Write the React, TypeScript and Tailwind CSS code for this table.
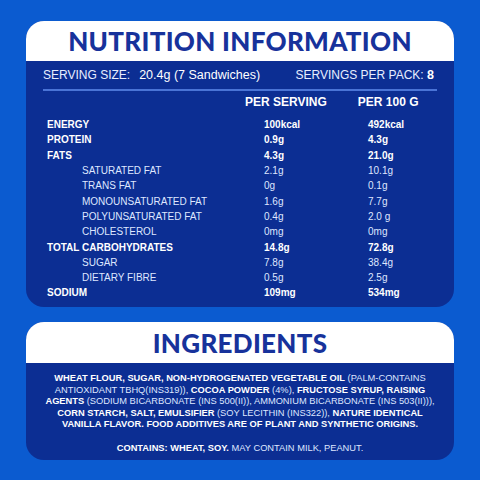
type Row = {
  label: string
  perServing: string
  per100: string
  main?: boolean
}

const rows: Row[] = [
  { label: "ENERGY", perServing: "100kcal", per100: "492kcal", main: true },
  { label: "PROTEIN", perServing: "0.9g", per100: "4.3g", main: true },
  { label: "FATS", perServing: "4.3g", per100: "21.0g", main: true },
  { label: "SATURATED FAT", perServing: "2.1g", per100: "10.1g" },
  { label: "TRANS FAT", perServing: "0g", per100: "0.1g" },
  { label: "MONOUNSATURATED FAT", perServing: "1.6g", per100: "7.7g" },
  { label: "POLYUNSATURATED FAT", perServing: "0.4g", per100: "2.0 g" },
  { label: "CHOLESTEROL", perServing: "0mg", per100: "0mg" },
  { label: "TOTAL CARBOHYDRATES", perServing: "14.8g", per100: "72.8g", main: true },
  { label: "SUGAR", perServing: "7.8g", per100: "38.4g" },
  { label: "DIETARY FIBRE", perServing: "0.5g", per100: "2.5g" },
  { label: "SODIUM", perServing: "109mg", per100: "534mg", main: true },
]

const titleFont = "font-['Lato','Inter',sans-serif] font-black"
const bodyFont = "font-['Liberation_Sans','Arial',sans-serif]"

const NutritionRow = ({ row }: { row: Row }) => (
  <div className={`grid grid-cols-[217px_104px_1fr] h-[15.3px] items-center text-[10px] leading-none ${row.main ? "font-bold text-white" : "text-[#dfe7ff]"}`}>
    <span className={row.main ? "" : "pl-[35px]"}>{row.label}</span>
    <span>{row.perServing}</span>
    <span>{row.per100}</span>
  </div>
)

const App = () => {
  return (
    <div className={`w-[480px] h-[480px] bg-[#0b5bd0] pt-[21px] px-[26px] flex flex-col gap-[15px] ${bodyFont}`}>
      <div className="rounded-[18px] overflow-hidden bg-[#0c2e93] h-[286px]">
        <div className="h-[40px] bg-white flex items-center justify-center">
          <h1 className={`${titleFont} text-[26px] leading-none text-[#17329b] tracking-[0.3px]`}>NUTRITION INFORMATION</h1>
        </div>
        <div className="px-[17px]">
          <div className="h-[28px] flex items-center justify-between text-white">
            <p className="text-[12px]">
              <span className="text-[#e8eeff]">SERVING SIZE:</span>
              <span className="ml-[9px] text-[12.5px]">20.4g (7 Sandwiches)</span>
            </p>
            <p className="text-[12px] pr-[3px]">
              <span className="text-[#e8eeff]">SERVINGS PER PACK: </span>
              <span className="text-[12.5px] font-bold">8</span>
            </p>
          </div>
          <div className="h-[1.5px] bg-[#4a74d6]" />
          <div className="h-[22px] flex items-center text-[12px] font-bold text-white">
            <span className="ml-[202px]">PER SERVING</span>
            <span className="ml-[31px]">PER 100 G</span>
          </div>
          <div className="pl-[4px] pt-[5px]">
            {rows.map((row) => (
              <NutritionRow key={row.label} row={row} />
            ))}
          </div>
        </div>
      </div>

      <div className="rounded-[18px] overflow-hidden bg-[#0c2e93] h-[138px]">
        <div className="h-[41px] bg-white flex items-center justify-center">
          <h2 className={`${titleFont} text-[26px] leading-none text-[#17329b] tracking-[0.3px]`}>INGREDIENTS</h2>
        </div>
        <div className="px-[10px] pt-[10px] text-center text-[9.3px] leading-[11.5px] text-[#dfe7ff] whitespace-nowrap">
          <p>
            <b className="text-white">WHEAT FLOUR, SUGAR, NON-HYDROGENATED VEGETABLE OIL</b> (PALM-CONTAINS
            <br />
            ANTIOXIDANT TBHQ(INS319)), <b className="text-white">COCOA POWDER</b> (4%),{" "}
            <b className="text-white">FRUCTOSE SYRUP, RAISING</b>
            <br />
            <b className="text-white">AGENTS</b> (SODIUM BICARBONATE (INS 500(II)), AMMONIUM BICARBONATE (INS 503(II))),
            <br />
            <b className="text-white">CORN STARCH, SALT, EMULSIFIER</b> (SOY LECITHIN (INS322)),{" "}
            <b className="text-white">NATURE IDENTICAL</b>
            <br />
            <b className="text-white">VANILLA FLAVOR. FOOD ADDITIVES ARE OF PLANT AND SYNTHETIC ORIGINS.</b>
          </p>
          <p className="mt-[12px]">
            <b className="text-white">CONTAINS: WHEAT, SOY.</b> MAY CONTAIN MILK, PEANUT.
          </p>
        </div>
      </div>
    </div>
  )
}

export default App
